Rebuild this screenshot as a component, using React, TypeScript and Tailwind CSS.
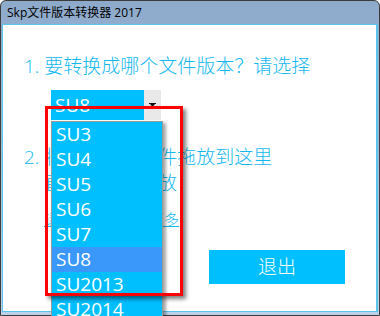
import React from "react";

const cjk = { fontFamily: '"Open Sans", "Noto Sans CJK SC", sans-serif' };

export default function App() {
  const items = ["SU3", "SU4", "SU5", "SU6", "SU7", "SU8", "SU2013", "SU2014"];
  return (
    <div className="relative w-[380px] h-[316px] overflow-hidden bg-white" style={cjk}>
      <div className="flex flex-col w-full h-full rounded-t-[6px] border border-[#3c3c3c] bg-gradient-to-b from-[#8eaacb] to-[#bcd2ea]">
        <div className="h-[23px] flex items-center pl-[6px] text-[12px] text-black leading-none">
          Skp文件版本转换器 2017
        </div>
        <div className="flex-1 mx-[1px] mb-[3px] bg-white border border-[#5cc3ea] border-r-[2px] flex flex-col pl-[21px] text-[#13b8ef]">
          <div className="mt-[28px] h-[26px] leading-[26px] text-[19px] font-light whitespace-nowrap">
            1. 要转换成哪个文件版本？请选择
          </div>
          <div className="mt-[11px] ml-[27px] flex h-[30px] w-[110px]">
            <div className="w-[93px] bg-[#00bfff] text-white text-[19px] leading-[30px] pl-[4px]">SU8</div>
            <div className="flex-1 bg-[#e9e9e9] flex items-center justify-center">
              <svg width="7" height="5" viewBox="0 0 7 5">
                <rect x="0" y="0" width="7" height="1" fill="#111" />
                <path d="M1 1 L6 1 L3.5 4 Z" fill="#111" />
              </svg>
            </div>
          </div>
          <div className="mt-[24px] h-[26px] leading-[26px] text-[19px] font-light whitespace-nowrap">
            2. 将要转换的文件拖放到这里
          </div>
          <div className="h-[26px] leading-[26px] text-[19px] font-light whitespace-nowrap pl-[20px]">
            直接拖入后释放
          </div>
          <div className="mt-[13px] h-[20px] leading-[20px] text-[15px] font-light whitespace-nowrap pl-[20px]">
            <span className="underline">请点击这里了解更多</span>
          </div>
          <div className="mt-[21px] ml-[185px] w-[136px] h-[34px] bg-[#00bfff] text-white text-[19px] font-light flex items-center justify-center">
            退出
          </div>
        </div>
      </div>

      {/* dropdown list */}
      <div className="absolute left-[51px] top-[121px] w-[112px] border border-[#9a9a9a] bg-[#00bfff] shadow-[3px_2px_3px_rgba(0,0,0,0.35)]">
        {items.map((it) => (
          <div
            key={it}
            className={
              it === "SU8"
                ? "h-[25px] leading-[25px] pl-[4px] text-[19px] text-white bg-[#3a98fa]"
                : "h-[25px] leading-[25px] pl-[4px] text-[19px] text-white"
            }
          >
            {it}
          </div>
        ))}
      </div>

      {/* red highlight */}
      <div className="absolute left-[45px] top-[106px] w-[138px] h-[190px] border-[3px] border-[#ff0000] shadow-[3px_3px_4px_rgba(0,0,0,0.5)]" />
    </div>
  );
}
